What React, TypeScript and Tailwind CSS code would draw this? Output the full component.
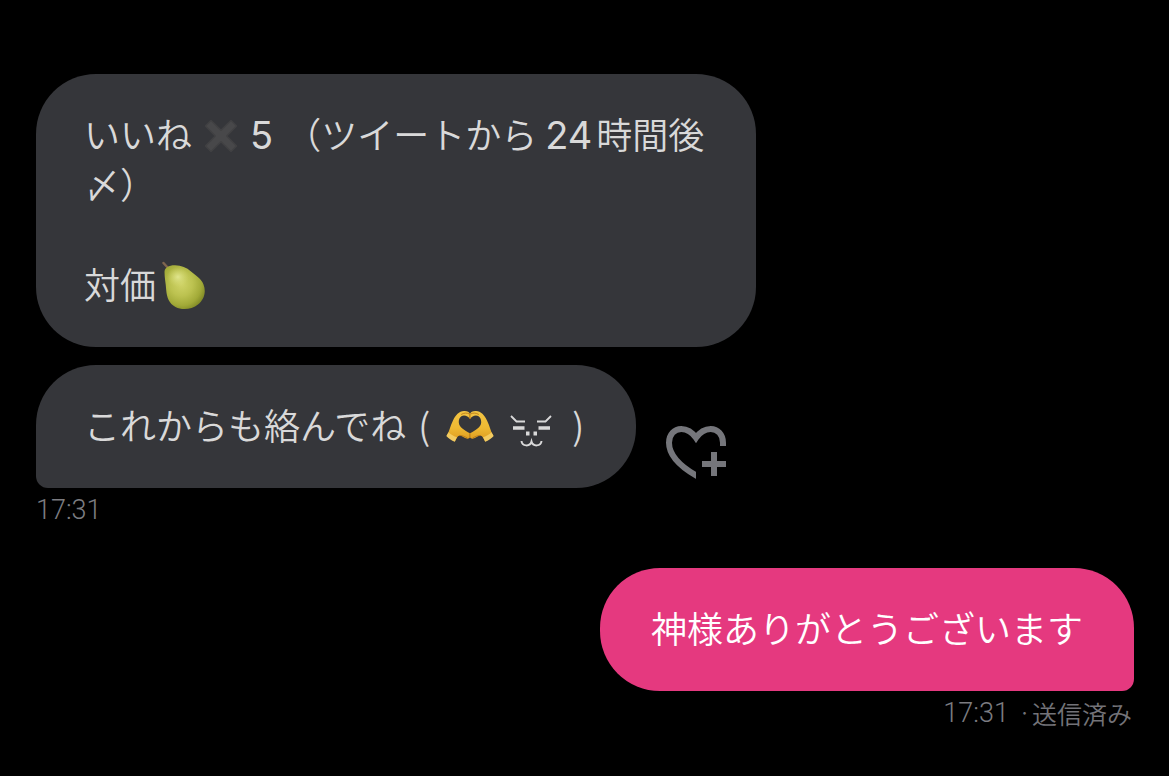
import type { ReactNode } from "react"
import clsx from "clsx"

type BubbleProps = {
  children: ReactNode
  outgoing?: boolean
  tail?: boolean
}

const CrossEmoji = () => (
  <svg role="img" aria-label="✖" viewBox="0 0 34 34" className="inline-block w-[34px] h-[34px] mx-3 align-[-4px]">
    <path d="M7 1.5 17 11.3 27 1.5 32.5 7 22.7 17 32.5 27 27 32.5 17 22.7 7 32.5 1.5 27 11.3 17 1.5 7Z"
      fill="#48484a" stroke="#414143" strokeWidth="1.5" strokeLinejoin="round" />
  </svg>
)

const PearEmoji = () => (
  <svg role="img" aria-label="🍐" viewBox="0 0 44 50" className="inline-block w-11 h-[50px] -my-2 ml-1.5 align-[-4px]">
    <defs>
      <radialGradient id="pear" cx="0.42" cy="0.42" r="0.62">
        <stop offset="0" stopColor="#d0d468" />
        <stop offset="0.45" stopColor="#bcc250" />
        <stop offset="0.8" stopColor="#a2aa38" />
        <stop offset="1" stopColor="#848d28" />
      </radialGradient>
      <radialGradient id="pearShine">
        <stop offset="0" stopColor="#e0e58e" />
        <stop offset="1" stopColor="#d0d66c" stopOpacity="0" />
      </radialGradient>
    </defs>
    <path d="M1.5 2 6.500 7.500" stroke="#80664f" strokeWidth="2.400" strokeLinecap="round" />
    <path d="M2.500 11C2.500 6.500 7 4.200 13 4.300C19.500 4.400 24.500 6.500 29 10.500C34 14.500 39.500 18 41.500 23.500C44.500 31 42 38.500 36 43.500C30 48.500 20 49.500 13.500 46C7 42.500 4.800 36.500 4.200 29C3.800 22 2.500 17 2.500 11Z" fill="url(#pear)" />
    <ellipse cx="16" cy="16" rx="11" ry="10" fill="url(#pearShine)" />
  </svg>
)

const HeartHandsEmoji = () => (
  <svg role="img" aria-label="🫶" viewBox="0 0 48 34" className="inline-block w-12 h-[34px] align-[-4px]">
    <defs>
      <linearGradient id="hands" x1="0" y1="0" x2="0" y2="1">
        <stop offset="0" stopColor="#f3c544" />
        <stop offset="0.55" stopColor="#eeb932" />
        <stop offset="1" stopColor="#dc991f" />
      </linearGradient>
      <g id="hand">
        <path d="M1.200 25C3.500 21 4.200 16 7 10.500C9.500 5 13 1.300 18 1C21 0.800 23.500 2 24 4V8.700C22.500 7 20.500 5.500 18 5.500C14.800 5.500 12.600 8.500 12.800 12.500C13 17 18.500 20.500 24 23.200V27C23.500 28.800 21.500 29 19.800 28.300C17.500 27.300 15.500 25.500 13.500 25.500C11.500 26 10 28.800 8.800 31.500Z" fill="url(#hands)" />
        <path d="M0.300 26 2.500 22.300C5 24.800 8 26.300 11 27.300L8.800 31.800C5.500 30.500 2.500 28.500 0.300 26Z" fill="#f3cb60" />
        <path d="M15.500 4.300C18 2.800 20.500 2.600 23 3.800M24 4V8.500M13.500 25.500C16 25.200 18.500 26.500 21 27.800M24 23.500V27" fill="none" stroke="#ba7c18" strokeWidth="0.900" strokeLinecap="round" />
      </g>
    </defs>
    <use href="#hand" />
    <use href="#hand" transform="translate(48 0) scale(-1 1)" />
  </svg>
)

const SleepyFace = () => (
  <svg role="img" aria-label="face" viewBox="0 0 42 34" className="inline-block w-[42px] h-[34px] ml-4 align-[-8px]"
    fill="none" stroke="#d9d9d9">
    <path d="M1 2 6.500 7.500H15M41 2 35.500 7.500H27" strokeWidth="1.800" />
    <path d="M3 14H14.500M28.500 14H40" strokeWidth="3.600" />
    <path d="M16 19.500H19.500M23.500 19.500H27" strokeWidth="3.800" />
    <path d="M11.500 27C12 32.500 20 33 21.500 27.500C23 33 31 32.500 31.500 27" strokeWidth="2" />
  </svg>
)

const AddReactionIcon = () => (
  <svg viewBox="0 0 24 24" className="w-[72px] h-[72px]" aria-hidden="true">
    <clipPath id="heartCut">
      <path d="M0 0H24V10H12V24H0Z" />
    </clipPath>
    <path clipPath="url(#heartCut)"
      d="M21 11V8.900C21 6.200 19.200 4.350 16.900 4.350C14.700 4.350 13.100 5.700 12 7.300C10.900 5.700 9.300 4.350 7.100 4.350C4.800 4.350 3 6.200 3 8.900C3 13.300 7.200 17 12 19.800L14 21"
      fill="none" stroke="currentColor" strokeWidth="2" />
    <path d="M17 12H19V15H22V17H19V20H17V17H14V15H17Z" fill="currentColor" />
  </svg>
)

const Bubble = ({ children, outgoing, tail }: BubbleProps) => {
  return (
    <div className={clsx(
      "w-fit max-w-[720px] rounded-[60px] pt-[34px] pb-[39px] text-4xl/[50px] font-[350]",
      outgoing ? "bg-[#e5397f] text-white px-[51px]" : "bg-[#35363a] text-[#d9d9d9] px-12",
      tail && (outgoing ? "rounded-br-xl" : "rounded-bl-xl")
    )}>
      {children}
    </div>
  )
}

const App = () => {
  return (
    <main className="min-h-screen bg-black pt-[74px] pl-9 pr-[35px] pb-12 font-['Noto_Sans_CJK_JP',sans-serif]">
      <Bubble>
        <p>
          いいね<CrossEmoji /><span className="font-['Inter'] font-normal text-[38px]/[38px]">5</span>
          <span className="ml-3">（ツイートから</span>
          <span className="font-['Inter'] font-normal text-[38px]/[38px] ml-2 mr-1">24</span>時間後〆）
        </p>
        <p className="mt-[50px]">対価<PearEmoji /></p>
      </Bubble>

      <div className="flex items-end mt-[18px]">
        <Bubble tail>
          <p className="whitespace-nowrap">
            これからも絡んでね<span className="ml-3 mr-4">(</span><HeartHandsEmoji /><SleepyFace /><span className="ml-5 mr-1">)</span>
          </p>
        </Bubble>
        <button type="button" aria-label="リアクションを追加" className="ml-6 text-[#75767b] cursor-pointer">
          <AddReactionIcon />
        </button>
      </div>
      <p className="mt-1.5 font-['Roboto'] font-light text-[27px]/[32px] text-[#7c7c81]">
        <time>17:31</time>
      </p>

      <div className="flex flex-col items-end mt-[42px]">
        <Bubble outgoing tail>
          <p>神様ありがとうございます</p>
        </Bubble>
        <p className="mt-1 mr-0.5 flex items-center text-[25px]/[36px] font-[350] text-[#737378]">
          <time className="font-['Roboto'] font-light text-[27px] text-[#7c7c81] mr-3">17:31</time>
          <span className="font-['Inter'] mr-1">·</span>
          <span>送信済み</span>
        </p>
      </div>
    </main>
  )
}

export default App
